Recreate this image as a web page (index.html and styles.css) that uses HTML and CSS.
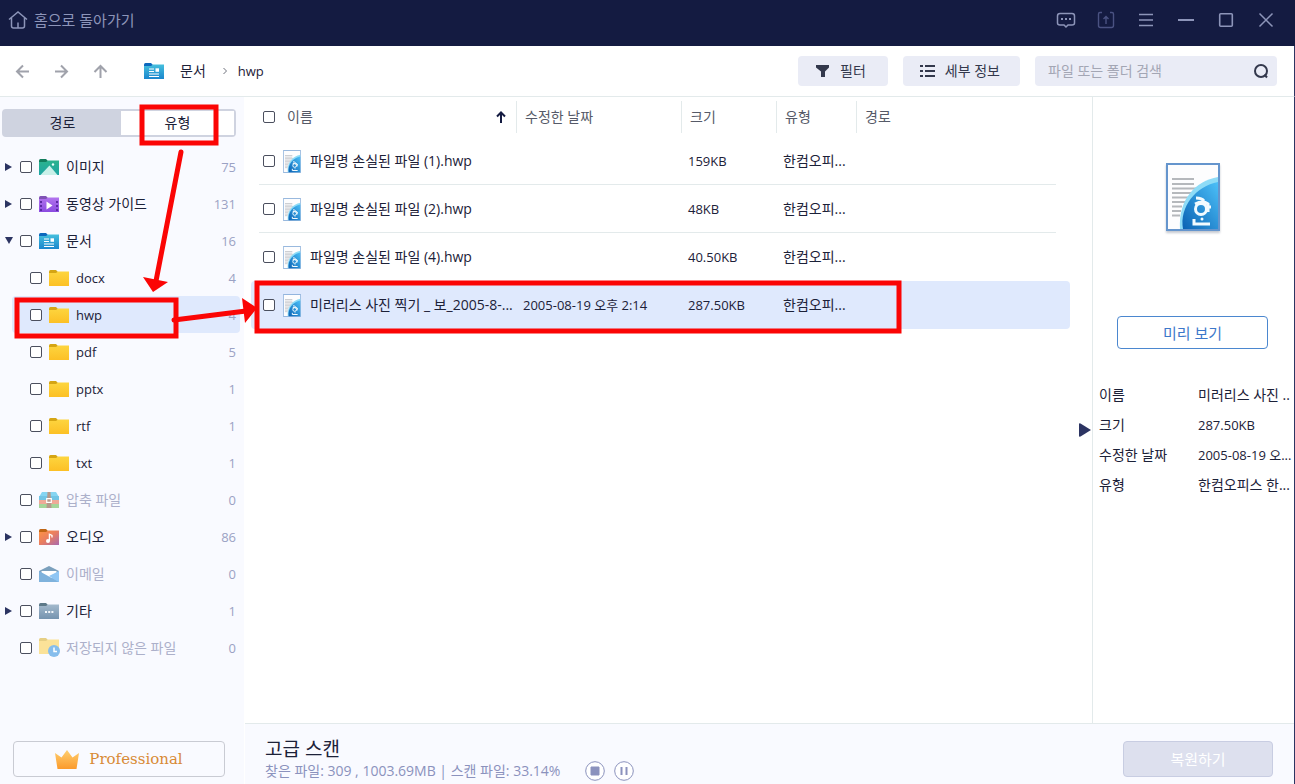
FILE: index.html
```
<!DOCTYPE html>
<html lang="ko">
<head>
  <meta charset="utf-8">
  <title>고급 스캔</title>
  <meta name="viewport" content="width=device-width, initial-scale=1">
  <link rel="stylesheet" href="styles.css">
</head>
<body>
  <!-- Shared icons -->
  <svg class="sprite" width="0" height="0" aria-hidden="true">
    <defs>
      <linearGradient id="gYellow" x2="0" y2="1"><stop offset="0" stop-color="#fdd53f"/><stop offset="1" stop-color="#fcc025"/></linearGradient>
      <linearGradient id="gBlue" x2="0" y2="1"><stop offset="0" stop-color="#45bfdd"/><stop offset="1" stop-color="#1a86cd"/></linearGradient>
      <linearGradient id="gGreen" x2="0" y2="1"><stop offset="0" stop-color="#2bb38d"/><stop offset="1" stop-color="#1fa5a5"/></linearGradient>
      <linearGradient id="gPurple" x2="0" y2="1"><stop offset="0" stop-color="#b274ee"/><stop offset="1" stop-color="#8a4ae0"/></linearGradient>
      <linearGradient id="gAudio" x2="1" y2="1"><stop offset="0" stop-color="#ff9440"/><stop offset=".5" stop-color="#e87d62"/><stop offset="1" stop-color="#a86ab0"/></linearGradient>
      <linearGradient id="gGray" x2="0" y2="1"><stop offset="0" stop-color="#a3b9cc"/><stop offset="1" stop-color="#7593af"/></linearGradient>
      <linearGradient id="gCrown" x2="0" y2="1"><stop offset="0" stop-color="#ffcf70"/><stop offset="1" stop-color="#fb9a2c"/></linearGradient>
      <linearGradient id="gHwp" x1="1" x2="0" y2="1"><stop offset="0" stop-color="#4cc0f8"/><stop offset="1" stop-color="#0a62b4"/></linearGradient>
    </defs>
    <symbol id="folder" viewBox="0 0 20 16"><path d="M0 5V1.500Q0 0 1.500 0H7L9 2V5z" fill="#d5a514"/><path d="M0 3H7L9 1.500H20V16H0z" fill="url(#gYellow)"/></symbol>
    <symbol id="doc" viewBox="0 0 20 16"><path d="M0 5V1.500Q0 0 1.500 0H7L9 2V5z" fill="#0c68bd"/><path d="M0 3H7L9 1.500H20V16H0z" fill="url(#gBlue)"/><path d="M5 6h5M5 8.500h5M5 11h10M5 13.500h10" stroke="#fff" stroke-width="1.200"/><path d="M11.500 5.300h3.500v3.500h-3.500z" fill="#fff"/></symbol>
    <symbol id="image" viewBox="0 0 20 16"><path d="M0 5V1.500Q0 0 1.500 0H7L9 2V5z" fill="#117c5c"/><path d="M0 3H7L9 1.500H20V16H0z" fill="url(#gGreen)"/><path d="M1.500 16L10.500 6.500L18.500 16z" fill="#c9f0e9"/><circle cx="14" cy="5.500" r="1.200" fill="#e9fffa"/></symbol>
    <symbol id="video" viewBox="0 0 20 16"><path d="M0 5V1.500Q0 0 1.500 0H7L9 2V5z" fill="#8052b5"/><path d="M0 3H7L9 1.500H20V16H0z" fill="url(#gPurple)"/><path d="M2 5v10M18 5v10" stroke="#5b2aa3" stroke-width="2" stroke-dasharray="2 2"/><path d="M7.500 5.500L13.500 9.500L7.500 13.500z" fill="#fff"/></symbol>
    <symbol id="audio" viewBox="0 0 20 16"><path d="M0 5V1.500Q0 0 1.500 0H7L9 2V5z" fill="#bf6515"/><path d="M0 3H7L9 1.500H20V16H0z" fill="url(#gAudio)"/><circle cx="9" cy="12" r="2" fill="#fff"/><path d="M10.400 12V5.200L13 6.500V8.500" fill="none" stroke="#fff" stroke-width="1.300"/></symbol>
    <symbol id="etc" viewBox="0 0 20 16"><path d="M0 5V1.500Q0 0 1.500 0H7L9 2V5z" fill="#5d7989"/><path d="M0 3H7L9 1.500H20V16H0z" fill="url(#gGray)"/><path d="M6 8h2v2H6zM9.200 8h2v2h-2zM12.400 8h2v2h-2z" fill="#f2f6fa"/></symbol>
    <symbol id="zip" viewBox="0 0 20 16"><path d="M0 5L3 0H17L20 5z" fill="#85d5f2"/><path d="M0 4h20v4H0z" fill="#72c5e5"/><path d="M0 8h20v4H0z" fill="#eeaa98"/><path d="M0 12h20v4H0z" fill="#a5d59a"/><path d="M8.500 0h3l1 16h-5z" fill="#b49a8c"/><path d="M7.700 6.700h4.600v3.600H7.700z" fill="#b49a8c" stroke="#fff" stroke-width="1.200"/></symbol>
    <symbol id="mail" viewBox="0 0 20 16"><path d="M0 5L10 0L20 5V9H0z" fill="#7ba0bd"/><path d="M2.500 5h15v6h-15z" fill="#fff"/><path d="M20 5V16H8z" fill="#8fc6f4"/><path d="M0 5L20 16H0z" fill="#7fb2dc"/><path d="M10 10L20 5V16z" fill="#8fc6f4"/></symbol>
    <symbol id="unsaved" viewBox="0 0 22 19"><path d="M0 5V1.500Q0 0 1.500 0H7L9 2V5z" fill="#e6cf85"/><path d="M0 3H7L9 1.500H20V16H0z" fill="#fbe298"/><circle cx="15" cy="13" r="6" fill="#86bdec"/><path d="M15 9.500V13.500H18" fill="none" stroke="#fff" stroke-width="1.500"/></symbol>
    <symbol id="hwp" viewBox="0 0 54 68"><path d="M1 1H53V67H1z" fill="#fdfdfe" stroke="#6595cd" stroke-width="2"/><path d="M6 16h22M6 21h22M6 25.500h24M6 30h20M6 34.500h16M6 39h13M6 43.500h10M6 48h9M6 52.500h8" stroke="#b5b8bc" stroke-width="2"/><path d="M52 14C29 18 12 37 14 66H17L52 20z" fill="#8edcf7"/><path d="M52 19C30 23 13 44 17 66H52z" fill="url(#gHwp)"/><g fill="none" stroke="#f2fbff" stroke-width="3"><circle cx="35" cy="46" r="5.500"/><path d="M30 35Q36 35 38 38M29 41Q37 37 42 41V49M42 44H45M28 56V61H44"/></g><circle cx="36" cy="56" r="1.500" fill="#f2fbff"/></symbol>
  </svg>

  <header class="titlebar">
    <a class="home" href="#">
      <svg width="20" height="18" viewBox="0 0 20 18" fill="none" stroke="currentColor" stroke-width="1.500"><path d="M1 8.500L10 1L19 8.500M3.500 7V15Q3.500 17 5.500 17H14.500Q16.500 17 16.500 15V7M10 17V11.500"/></svg>
      홈으로 돌아가기
    </a>
    <div class="window-buttons">
      <button aria-label="피드백"><svg width="20" height="20" viewBox="0 0 20 20" fill="none" stroke="currentColor" stroke-width="1.500"><path d="M4 3.500H16Q18.500 3.500 18.500 6V13Q18.500 15 16 15H12L10 17L8 15H4Q1.500 15 1.500 13V6Q1.500 3.500 4 3.500z"/><path d="M5 9h2M9 9h2M13 9h2" stroke-width="2"/></svg></button>
      <button class="dim" aria-label="내보내기"><svg width="20" height="20" viewBox="0 0 20 20" fill="none" stroke="currentColor" stroke-width="1.400"><path d="M6 2.500H4Q2.500 2.500 2.500 4V15.500Q2.500 17.500 4.500 17.500H15.500Q17.500 17.500 17.500 15.500V4Q17.500 2.500 16 2.500H14M10 14V7M7.500 9L10 6.500L12.500 9"/></svg></button>
      <button aria-label="메뉴"><svg width="20" height="20" viewBox="0 0 20 20" stroke="currentColor" stroke-width="1.500"><path d="M3 4.500h14M3 10h14M3 15.500h14"/></svg></button>
      <button aria-label="최소화"><svg width="20" height="20" viewBox="0 0 20 20" stroke="currentColor" stroke-width="2"><path d="M2 10h16"/></svg></button>
      <button aria-label="최대화"><svg width="20" height="20" viewBox="0 0 20 20" fill="none" stroke="currentColor" stroke-width="1.600"><rect x="3.700" y="3.700" width="12.600" height="12.600" rx="1"/></svg></button>
      <button aria-label="닫기"><svg width="20" height="20" viewBox="0 0 20 20" stroke="currentColor" stroke-width="1.500"><path d="M3.500 3.500L16.500 16.500M16.500 3.500L3.500 16.500"/></svg></button>
    </div>
  </header>

  <nav class="toolbar">
    <div class="history">
      <button aria-label="뒤로"><svg width="15" height="15" viewBox="0 0 15 15"><path d="M14 7.500H2M8 1.500L2 7.500L8 13.500"/></svg></button>
      <button aria-label="앞으로"><svg width="15" height="15" viewBox="0 0 15 15"><path d="M1 7.500H13M7 1.500L13 7.500L7 13.500"/></svg></button>
      <button aria-label="위로"><svg width="15" height="15" viewBox="0 0 15 15"><path d="M7.500 14V2M1.500 8L7.500 2L13.500 8"/></svg></button>
    </div>
    <div class="breadcrumb">
      <svg width="20" height="16"><use href="#doc"/></svg>
      <a href="#">문서</a>
      <svg class="chevron" width="6" height="8" viewBox="0 0 6 8"><path d="M1.500 1L4.500 4L1.500 7"/></svg>
      <a class="latin" href="#">hwp</a>
    </div>
    <div class="actions">
      <button class="tool filter">
        <svg width="14" height="12" viewBox="0 0 14 12" fill="currentColor"><path d="M0 0H13V2.500L9 6.500V12H5V6.500L0 2.500z"/></svg>
        필터
      </button>
      <button class="tool view">
        <svg width="15" height="12" viewBox="0 0 15 12" stroke="currentColor" stroke-width="2"><path d="M0 1h3M5 1h10M0 6h3M5 6h10M0 11h3M5 11h10"/></svg>
        세부 정보
      </button>
      <div class="search">
        <input type="text" aria-label="검색" placeholder="파일 또는 폴더 검색">
        <svg width="16" height="16" viewBox="0 0 16 16" fill="none" stroke="#33384c" stroke-width="2"><circle cx="8" cy="8" r="6"/><path d="M11.500 11.500L14 14.500"/></svg>
      </div>
    </div>
  </nav>

  <div class="workspace">
    <aside class="sidebar">
      <div class="tabs">
        <button class="tab">경로</button>
        <button class="tab current">유형</button>
      </div>

      <ul class="tree">
        <li><span class="caret right"></span><input type="checkbox" id="t1"><svg><use href="#image"/></svg><label for="t1">이미지</label><span class="count">75</span></li>
        <li><span class="caret right"></span><input type="checkbox" id="t2"><svg><use href="#video"/></svg><label for="t2">동영상 가이드</label><span class="count">131</span></li>
        <li><span class="caret down"></span><input type="checkbox" id="t3"><svg><use href="#doc"/></svg><label for="t3">문서</label><span class="count">16</span></li>
        <li class="child"><input type="checkbox" id="t4"><svg><use href="#folder"/></svg><label for="t4">docx</label><span class="count">4</span></li>
        <li class="child selected"><input type="checkbox" id="t5"><svg><use href="#folder"/></svg><label for="t5">hwp</label><span class="count">4</span></li>
        <li class="child"><input type="checkbox" id="t6"><svg><use href="#folder"/></svg><label for="t6">pdf</label><span class="count">5</span></li>
        <li class="child"><input type="checkbox" id="t7"><svg><use href="#folder"/></svg><label for="t7">pptx</label><span class="count">1</span></li>
        <li class="child"><input type="checkbox" id="t8"><svg><use href="#folder"/></svg><label for="t8">rtf</label><span class="count">1</span></li>
        <li class="child"><input type="checkbox" id="t9"><svg><use href="#folder"/></svg><label for="t9">txt</label><span class="count">1</span></li>
        <li class="empty"><span class="caret"></span><input type="checkbox" id="t10"><svg><use href="#zip"/></svg><label for="t10">압축 파일</label><span class="count">0</span></li>
        <li><span class="caret right"></span><input type="checkbox" id="t11"><svg><use href="#audio"/></svg><label for="t11">오디오</label><span class="count">86</span></li>
        <li class="empty"><span class="caret"></span><input type="checkbox" id="t12"><svg><use href="#mail"/></svg><label for="t12">이메일</label><span class="count">0</span></li>
        <li><span class="caret right"></span><input type="checkbox" id="t13"><svg><use href="#etc"/></svg><label for="t13">기타</label><span class="count">1</span></li>
        <li class="empty"><span class="caret"></span><input type="checkbox" id="t14"><svg class="tall"><use href="#unsaved"/></svg><label for="t14">저장되지 않은 파일</label><span class="count">0</span></li>
      </ul>

      <button class="edition">
        <svg width="24" height="19" viewBox="0 0 24 19"><path d="M0 3L6.500 7.500L12 0L17.500 7.500L24 3L21.500 19H2.500z" fill="url(#gCrown)"/></svg>
        Professional
      </button>
    </aside>

    <div class="content">
      <div class="panes">
        <main class="files">
          <table>
            <colgroup>
              <col class="c-name"><col class="c-date"><col class="c-size"><col class="c-type"><col>
            </colgroup>
            <thead>
              <tr>
                <th><div class="cell"><input type="checkbox" aria-label="모두 선택"><span>이름</span><svg class="sort" width="10" height="12" viewBox="0 0 10 12"><path d="M5 12V2M1 5.500L5 1.500L9 5.500"/></svg></div></th>
                <th>수정한 날짜</th>
                <th>크기</th>
                <th>유형</th>
                <th>경로</th>
              </tr>
            </thead>
            <tbody>
              <tr>
                <td><div class="cell"><input type="checkbox" id="f1"><svg class="file"><use href="#hwp"/></svg><label for="f1">파일명 손실된 파일 (1).hwp</label></div></td>
                <td></td><td class="size">159KB</td><td>한컴오피...</td><td></td>
              </tr>
              <tr>
                <td><div class="cell"><input type="checkbox" id="f2"><svg class="file"><use href="#hwp"/></svg><label for="f2">파일명 손실된 파일 (2).hwp</label></div></td>
                <td></td><td class="size">48KB</td><td>한컴오피...</td><td></td>
              </tr>
              <tr>
                <td><div class="cell"><input type="checkbox" id="f3"><svg class="file"><use href="#hwp"/></svg><label for="f3">파일명 손실된 파일 (4).hwp</label></div></td>
                <td></td><td class="size">40.50KB</td><td>한컴오피...</td><td></td>
              </tr>
              <tr class="selected">
                <td><div class="cell"><input type="checkbox" id="f4"><svg class="file"><use href="#hwp"/></svg><label for="f4">미러리스 사진 찍기 _ 보_2005-8-...</label></div></td>
                <td class="date">2005-08-19 오후 2:14</td><td class="size">287.50KB</td><td>한컴오피...</td><td></td>
              </tr>
            </tbody>
          </table>
        </main>

        <button class="collapse" aria-label="미리 보기 창 접기"><svg width="12" height="14" viewBox="0 0 12 14"><path d="M0 1Q0 0 1.500 0.500L12 7L1.500 13.500Q0 14 0 13z" fill="#2c3462"/></svg></button>

        <section class="details">
          <svg class="preview" width="54" height="68"><use href="#hwp"/></svg>
          <button class="open-preview">미리 보기</button>
          <dl>
            <dt>이름</dt><dd>미러리스 사진 ..</dd>
            <dt>크기</dt><dd class="size">287.50KB</dd>
            <dt>수정한 날짜</dt><dd class="date">2005-08-19 오...</dd>
            <dt>유형</dt><dd>한컴오피스 한...</dd>
          </dl>
        </section>
      </div>

      <footer class="status">
        <div>
          <h1>고급 스캔</h1>
          <div class="progress">
            <span>찾은 파일: 309 , 1003.69MB | 스캔 파일: 33.14%</span>
            <button aria-label="중지"><svg width="20" height="20" viewBox="0 0 20 20"><circle cx="10" cy="10" r="9.300"/><path d="M6 6h8v8H6z" fill="#8b92bd"/></svg></button>
            <button aria-label="일시 중지"><svg width="20" height="20" viewBox="0 0 20 20"><circle cx="10" cy="10" r="9.300"/><path d="M7.500 6v8M12.500 6v8" stroke-width="2"/></svg></button>
          </div>
        </div>
        <button class="recover" disabled>복원하기</button>
      </footer>
    </div>
  </div>

  <!-- Guide marks over the window -->
  <svg class="marks" width="910" height="345" viewBox="0 0 910 345" aria-hidden="true">
    <g fill="none" stroke="#fb0505" stroke-width="5">
      <rect x="142" y="107" width="74" height="36"/>
      <rect x="17" y="300" width="159" height="36"/>
      <rect x="257" y="283" width="642" height="48"/>
      <path d="M181 152L156 281M174 320L246 311" stroke-linecap="round"/>
    </g>
    <path d="M143 277L168 282L153 292zM242 298L257 308L245 323z" fill="#fb0505"/>
  </svg>
</body>
</html>
```
FILE: styles.css
```
/* Base */
* {
  box-sizing: border-box;
}

body {
  margin: 0;
  height: 100vh;
  display: flex;
  flex-direction: column;
  overflow: hidden;
  background: #fff;
  color: #1c2138;
  font-family: "Open Sans", "Noto Sans CJK KR", sans-serif;
  font-size: 14px;
  line-height: 20px;
}

button {
  font: inherit;
  color: inherit;
  background: none;
  border: none;
  padding: 0;
  cursor: pointer;
}

a {
  color: inherit;
  text-decoration: none;
}

svg {
  display: block;
  flex: none;
}

input[type="checkbox"] {
  appearance: none;
  flex: none;
  width: 12px;
  height: 12px;
  margin: 0;
  border: 1px solid #4b4f5e;
  border-radius: 2px;
  background: #fff;
}

.sprite {
  position: absolute;
}

/* Title bar */
.titlebar {
  flex: none;
  height: 46px;
  padding: 0 19px 6px 8px;
  display: flex;
  align-items: center;
  justify-content: space-between;
  background: #141b41;
  color: #8d95b9;
}

.home {
  display: flex;
  align-items: center;
  gap: 6px;
  font-size: 15px;
}

.window-buttons {
  display: flex;
  gap: 20px;
}

.window-buttons .dim {
  color: #4a5282;
}

/* Toolbar */
.toolbar {
  flex: none;
  height: 51px;
  padding: 0 17px 0 15px;
  display: flex;
  align-items: center;
  border-bottom: 1px solid #e3eaeb;
  border-right: 1px solid #2c3462;
}

.history {
  display: flex;
  gap: 24px;
}

.history svg {
  fill: none;
  stroke: #a0a2ab;
  stroke-width: 2;
}

.breadcrumb {
  display: flex;
  align-items: center;
  margin-left: 36px;
}

.breadcrumb a {
  margin-left: 16px;
}

.breadcrumb .latin {
  margin-left: 10px;
  font-size: 13px;
}

.chevron {
  margin-left: 16px;
  fill: none;
  stroke: #6f727d;
}

.actions {
  display: flex;
  gap: 15px;
  margin-left: auto;
}

.tool {
  height: 30px;
  display: flex;
  align-items: center;
  border-radius: 4px;
  background: #eaecf6;
  color: #33384c;
}

.view {
  gap: 10px;
  padding: 0 20px 0 17px;
}

.filter {
  gap: 10px;
  padding: 0 22px 0 18px;
}

.search {
  width: 242px;
  height: 30px;
  padding: 0 8px 0 13px;
  display: flex;
  align-items: center;
  border-radius: 4px;
  background: #eaecf6;
}

.search input {
  flex: 1;
  min-width: 0;
  border: none;
  outline: none;
  padding: 0;
  background: none;
  font: inherit;
}

.search input::placeholder {
  color: #a3a6b4;
}

/* Workspace */
.workspace {
  flex: 1;
  min-height: 0;
  display: flex;
  border-right: 1px solid #2c3462;
}

.sidebar {
  flex: none;
  width: 244px;
  padding-top: 12px;
  display: flex;
  flex-direction: column;
  background: #f9faff;
}

.tabs {
  height: 28px;
  margin: 0 8px 0 2px;
  display: flex;
  border: 2px solid #cfd3e0;
  border-radius: 4px;
  background: #cfd3e0;
}

.tab {
  flex: 1;
}

.tab.current {
  flex: none;
  width: 113px;
  background: #fff;
}

/* File type tree */
.tree {
  list-style: none;
  margin: 11px 0 0;
  padding: 0;
}

.tree li {
  height: 37px;
  padding: 0 8px 0 5px;
  display: flex;
  align-items: center;
}

.tree svg {
  width: 20px;
  height: 16px;
  margin: 0 7px;
}

.tree svg.tall {
  width: 22px;
  height: 19px;
  margin-right: 5px;
}

.tree .child {
  padding-left: 30px;
  font-size: 13px;
}

.tree .child.selected {
  margin: 0 4px 0 12px;
  padding: 0 4px 0 18px;
  border-radius: 4px;
  background: #dfe9fd;
}

.empty label {
  color: #acb0ca;
}

.count {
  margin-left: auto;
  color: #9ba2c4;
  font-size: 13px;
}

.caret {
  width: 15px;
  flex: none;
}

.caret::before {
  content: "";
  display: block;
  width: 0;
}

.caret.right::before {
  border: 4px solid transparent;
  border-left: 7px solid #2c3462;
  border-right: none;
}

.caret.down::before {
  border: 4px solid transparent;
  border-top: 7px solid #2c3462;
  border-bottom: none;
}

.edition {
  height: 36px;
  margin: auto 19px 7px 13px;
  display: flex;
  align-items: center;
  justify-content: center;
  gap: 10px;
  border: 1px solid #c9cbd3;
  border-radius: 4px;
  color: #d88a35;
  font-family: "DejaVu Serif", serif;
  font-size: 15px;
}

/* File list */
.content {
  flex: 1;
  min-width: 0;
  margin-left: 1px;
  display: flex;
  flex-direction: column;
}

.panes {
  flex: 1;
  min-height: 0;
  display: flex;
}

.files {
  flex: 1;
  min-width: 0;
  padding-left: 6px;
}

table {
  width: 100%;
  table-layout: fixed;
  border-spacing: 0;
}

.c-name {
  width: 265px;
}

.c-date {
  width: 165px;
}

.c-size {
  width: 95px;
}

.c-type {
  width: 80px;
}

th {
  height: 40px;
  padding: 0 0 0 9px;
  text-align: left;
  font-weight: 400;
  color: #565a68;
  background: linear-gradient(#e3eaeb, #e3eaeb) no-repeat 0 50% / 1px 32px;
}

th:first-child {
  padding: 0 10px 0 12px;
  background: none;
}

th .cell span {
  margin-left: 12px;
}

td {
  height: 48px;
  padding: 0 0 0 7px;
  white-space: nowrap;
}

td:first-child {
  padding-left: 12px;
}

tbody tr {
  background: linear-gradient(#e3eaeb, #e3eaeb) no-repeat 8px 100% / calc(100% - 22px) 1px;
}

tbody tr:nth-last-child(2),
tbody tr.selected {
  background: none;
}

.selected td {
  background: #dfe9fd;
}

.selected td:first-child {
  border-radius: 4px 0 0 4px;
}

.selected td:last-child {
  border-radius: 0 4px 4px 0;
}

.cell {
  display: flex;
  align-items: center;
}

.sort {
  margin-left: auto;
  fill: none;
  stroke: #141b41;
  stroke-width: 2;
}

.file {
  width: 18px;
  height: 23px;
  margin: 0 9px 0 8px;
}

.size,
.date {
  font-size: 13px;
}

/* Details pane */
.collapse {
  flex: none;
  width: 22px;
  padding: 40px 0 0 9px;
}

.details {
  flex: none;
  width: 202px;
  padding: 66px 0 0 6px;
  border-left: 1px solid #e3eaeb;
}

.preview {
  margin-left: 67px;
  filter: drop-shadow(0 2px 1px #c4c8d0);
}

.open-preview {
  display: block;
  width: 151px;
  height: 33px;
  margin: 85px 0 0 18px;
  border: 1px solid #4b87cf;
  border-radius: 4px;
  color: #3d78ca;
  font-size: 15px;
}

dl {
  display: grid;
  grid-template-columns: 99px 1fr;
  row-gap: 10px;
  margin: 36px 0 0;
}

dd {
  margin: 0;
  white-space: nowrap;
  overflow: hidden;
}

/* Footer */
.status {
  flex: none;
  height: 61px;
  padding: 0 21px 0 20px;
  display: flex;
  align-items: center;
  justify-content: space-between;
  border-top: 1px solid #e3eaeb;
  background: #f9faff;
}

h1 {
  margin: 10px 0 0;
  font-size: 19px;
  font-weight: 400;
  line-height: 24px;
}

.progress {
  display: flex;
  align-items: center;
  gap: 9px;
  color: #8b92bd;
}

.progress span {
  margin-right: 16px;
}

.progress svg {
  fill: #fff;
  stroke: #8b92bd;
}

.recover {
  width: 150px;
  height: 36px;
  margin-top: 9px;
  border: 1px solid #c8cde2;
  border-radius: 4px;
  background: #dde0ee;
  color: #fff;
  font-size: 15px;
}

/* Guide marks */
.marks {
  position: absolute;
  top: 0;
  left: 0;
  pointer-events: none;
}
```
